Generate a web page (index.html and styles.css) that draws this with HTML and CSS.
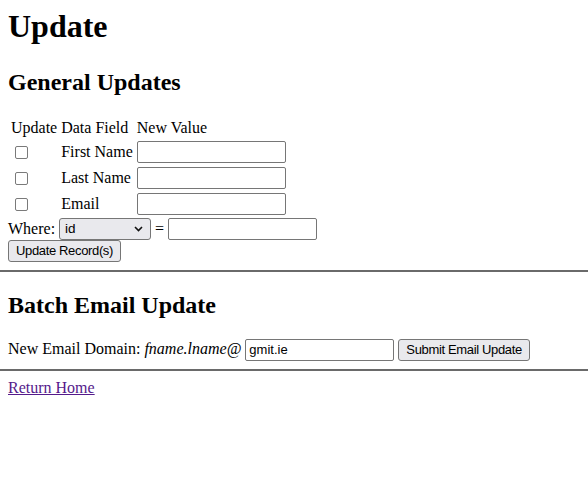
FILE: index.html
```html
<!DOCTYPE html>
<html>
<head>
<meta charset="utf-8">
<title>Update</title>
<link rel="stylesheet" href="styles.css">
</head>
<body class="page">
<div class="wrap top">
<h1 class="title">Update</h1>
<h2 class="section">General Updates</h2>
<form class="form">
<table class="fields">
<tr><td>Update</td><td>Data Field</td><td>New Value</td></tr>
<tr><td><input type="checkbox" class="chk"></td><td>First Name</td><td><input type="text" class="txt"></td></tr>
<tr><td><input type="checkbox" class="chk"></td><td>Last Name</td><td><input type="text" class="txt"></td></tr>
<tr><td><input type="checkbox" class="chk"></td><td>Email</td><td><input type="text" class="txt"></td></tr>
</table>
<div class="where">
<span>Where:</span>
<span class="selwrap"><select class="sel"><option>id</option></select><svg class="chev" width="9" height="6" viewBox="0 0 9 6"><polyline points="1,1 4.5,4.5 8,1" fill="none" stroke="#111" stroke-width="1.6"/></svg></span>
<span>=</span>
<input type="text" class="txt">
</div>
<button type="button" class="btn block">Update Record(s)</button>
</form>
</div>
<hr class="rule">
<div class="wrap">
<h2 class="section">Batch Email Update</h2>
<form class="form">
<div class="line">New Email Domain: <i>fname.lname@</i> <input type="text" class="txt" value="gmit.ie"> <button type="button" class="btn">Submit Email Update</button></div>
</form>
</div>
<hr class="rule">
<div class="wrap">
<a class="link" href="#">Return Home</a>
</div>
</body>
</html>
```
FILE: styles.css
```css
.page {
  font-family: "Liberation Serif", "Times New Roman", serif;
  font-size: 16px;
  margin: 0;
  color: #000;
  background: #fff;
}
.wrap {
  padding: 0 8px;
}
.top { padding-top: 8px; }
.title {
  font-size: 32px;
  margin: 0 0 24px;
}
.section {
  font-size: 24px;
  margin: 19.92px 0;
}
.form { margin: 0; }
.fields { border-spacing: 2px; margin-top: 1px; }
.fields td { padding: 1px; }
.txt, .sel, .btn {
  font-family: "Liberation Sans", Arial, sans-serif;
  font-size: 13px;
  color: #000;
  box-sizing: border-box;
  height: 22px;
  margin: 0;
}
.txt {
  width: 149px;
  border: 1px solid #767676;
  border-radius: 2px;
  padding: 1px 3px;
  background: #fff;
  vertical-align: middle;
}
.chk {
  appearance: none;
  -webkit-appearance: none;
  width: 13px;
  height: 13px;
  border: 1px solid #7a7a7a;
  border-radius: 2px;
  background: #fff;
  margin: 3px 3px 3px 4px;
  vertical-align: middle;
  box-sizing: border-box;
}
.where {
  display: flex;
  align-items: center;
  gap: 4px;
  height: 22px;
}
.selwrap {
  position: relative;
  display: inline-block;
  height: 22px;
}
.sel {
  appearance: none;
  -webkit-appearance: none;
  width: 92px;
  border: 1px solid #767676;
  border-radius: 3px;
  background: #e9e9ed;
  padding: 0 5px;
  font-size: 13.5px;
  display: block;
}
.chev {
  position: absolute;
  right: 8px;
  top: 8px;
  pointer-events: none;
}
.btn {
  border: 1px solid #767676;
  border-radius: 3px;
  background: #e9e9ed;
  padding: 0 7px;
  letter-spacing: -0.35px;
  vertical-align: middle;
}
.block { display: block; }
.line { margin-top: 1px; }
.line i { font-style: italic; }
.rule {
  border: none;
  border-top: 2px solid #6a6a6a;
  margin: 8px 0;
  height: 0;
}
.link { color: #551a8b; }
```
